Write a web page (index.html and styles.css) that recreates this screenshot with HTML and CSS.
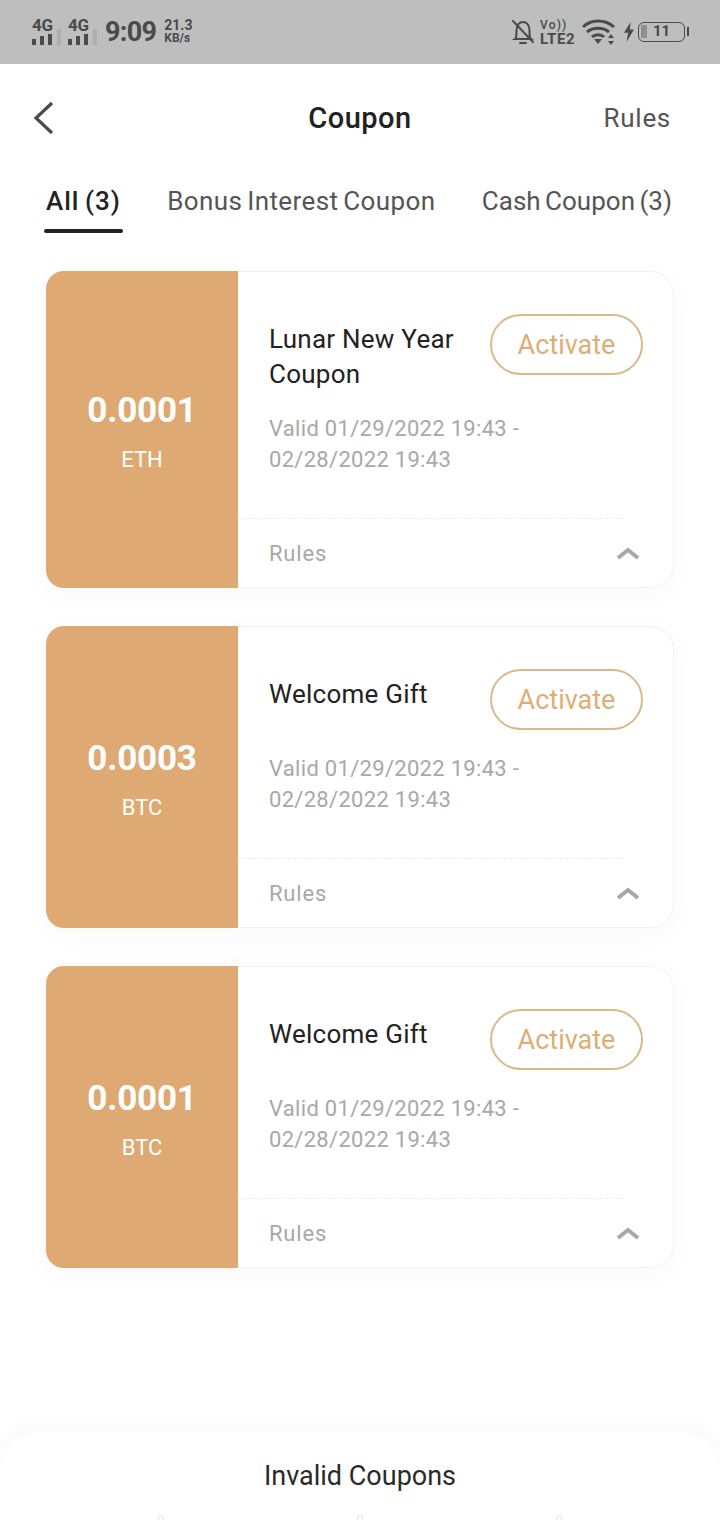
FILE: index.html
```html
<!DOCTYPE html>
<html lang="en">
<head>
    <meta charset="UTF-8">
    <meta name="viewport" content="width=device-width, initial-scale=1.0">
    <title>Coupon</title>
    <link rel="stylesheet" href="styles.css">
</head>
<body>

<div class="status-bar">
    <div class="status-left">
        <div class="sim">
            <div class="sim-signal">
                <span class="sim-label">4G</span>
                <svg width="20" height="11" viewBox="0 0 20 11"><path fill="#4a4a4a" d="M0 5h4v6H0zM8 2h4v9H8zM16 0h4v11h-4z"/></svg>
            </div>
            <i class="sim-off"></i>
        </div>
        <div class="sim">
            <div class="sim-signal">
                <span class="sim-label">4G</span>
                <svg width="20" height="11" viewBox="0 0 20 11"><path fill="#4a4a4a" d="M0 5h4v6H0zM8 2h4v9H8zM16 0h4v11h-4z"/></svg>
            </div>
            <i class="sim-off"></i>
        </div>
        <span class="clock">9:09</span>
        <span class="speed">21.3<small>KB/s</small></span>
    </div>
    <div class="status-right">
        <svg class="bell" width="22" height="26" viewBox="0 0 22 26" fill="none" stroke="#4a4a4a" stroke-width="2"><path d="M3 20c1.500-1 1.500-3 1.500-9 0-5 3-8 6.500-8s6.500 3 6.500 8c0 6 0 8 1.500 9z"/><path d="M8 24h6M1 2l20 21" stroke-linecap="round"/></svg>
        <span class="volte"><small>Vo))</small>LTE2</span>
        <svg class="wifi" width="34" height="26" viewBox="0 0 34 26" fill="none" stroke="#4a4a4a" stroke-width="3"><path d="M1 8c8-8 22-8 31 0M5 13c6-5 16-5 22 0M10 18c3-3 9-3 12 0"/><path fill="#4a4a4a" stroke="none" d="M12 20h8l-4 5zM29 15l3 4h-6zM29 26l3-4h-6z"/></svg>
        <svg class="bolt" width="14" height="20" viewBox="0 0 14 24"><path fill="#4a4a4a" d="M9 0 1 13h5l-2 11 9-15H8z"/></svg>
        <div class="battery"><i class="battery-level"></i>11</div>
    </div>
</div>

<div class="header">
    <svg class="back" width="24" height="34" viewBox="0 0 24 34" fill="none" stroke="#4a4a4a" stroke-width="3.2"><path d="M20 2 4 17l16 15"/></svg>
    <h1>Coupon</h1>
    <a class="header-rules">Rules</a>
</div>

<div class="tabs">
    <div class="tab active">All (3)</div>
    <div class="tab">Bonus Interest Coupon</div>
    <div class="tab tab-cash">Cash Coupon (3)</div>
</div>

<div class="coupon-list">
    <div class="coupon">
        <div class="coupon-amount">
            <div class="amount">0.0001</div>
            <div class="currency">ETH</div>
        </div>
        <div class="coupon-main">
            <div class="coupon-body">
                <div class="coupon-top">
                    <div class="coupon-title">Lunar New Year Coupon</div>
                    <button class="activate">Activate</button>
                </div>
                <div class="valid">Valid 01/29/2022 19:43 -<br>02/28/2022 19:43</div>
            </div>
            <div class="coupon-rules">
                <span>Rules</span>
                <svg width="22" height="14" viewBox="0 0 22 14" fill="none" stroke="#a8a8a8" stroke-width="4"><path d="M1 12 11 4l10 8"/></svg>
            </div>
        </div>
    </div>

    <div class="coupon">
        <div class="coupon-amount">
            <div class="amount">0.0003</div>
            <div class="currency">BTC</div>
        </div>
        <div class="coupon-main">
            <div class="coupon-body">
                <div class="coupon-top">
                    <div class="coupon-title">Welcome Gift</div>
                    <button class="activate">Activate</button>
                </div>
                <div class="valid">Valid 01/29/2022 19:43 -<br>02/28/2022 19:43</div>
            </div>
            <div class="coupon-rules">
                <span>Rules</span>
                <svg width="22" height="14" viewBox="0 0 22 14" fill="none" stroke="#a8a8a8" stroke-width="4"><path d="M1 12 11 4l10 8"/></svg>
            </div>
        </div>
    </div>

    <div class="coupon">
        <div class="coupon-amount">
            <div class="amount">0.0001</div>
            <div class="currency">BTC</div>
        </div>
        <div class="coupon-main">
            <div class="coupon-body">
                <div class="coupon-top">
                    <div class="coupon-title">Welcome Gift</div>
                    <button class="activate">Activate</button>
                </div>
                <div class="valid">Valid 01/29/2022 19:43 -<br>02/28/2022 19:43</div>
            </div>
            <div class="coupon-rules">
                <span>Rules</span>
                <svg width="22" height="14" viewBox="0 0 22 14" fill="none" stroke="#a8a8a8" stroke-width="4"><path d="M1 12 11 4l10 8"/></svg>
            </div>
        </div>
    </div>
</div>

<div class="invalid-sheet">
    Invalid Coupons
    <div class="sheet-marks"><i></i><i></i><i></i></div>
</div>

</body>
</html>
```

FILE: styles.css
```css
* {
    box-sizing: border-box;
}
html, body {
    height: 1520px;
    overflow: hidden;
}
body {
    margin: 0;
    position: relative;
    background-color: white;
    font-family: Roboto, sans-serif;
    color: #222;
}
.status-bar {
    height: 64px;
    background-color: #bebebe;
    display: flex;
    justify-content: space-between;
    align-items: center;
    padding: 0 32px;
    color: #4a4a4a;
}
.status-left, .status-right {
    display: flex;
    align-items: center;
}
.sim {
    display: flex;
    align-items: flex-end;
    gap: 4px;
    width: 36px;
}
.sim-signal {
    display: flex;
    flex-direction: column;
    gap: 2px;
}
.sim-signal svg {
    display: block;
}
.sim-label {
    font-size: 17px;
    font-weight: 700;
    line-height: 13px;
    letter-spacing: -0.3px;
}
.sim-off {
    width: 4px;
    height: 16px;
    background-color: #aeaeae;
}
.clock {
    font-size: 27px;
    font-weight: 700;
    letter-spacing: -0.7px;
    margin: 0 8px 0 1px;
}
.speed {
    font-size: 14px;
    font-weight: 700;
    line-height: 13px;
}
.speed small {
    display: block;
    font-size: 12px;
}
.status-right {
    margin-right: 3px;
}
.volte {
    font-size: 15px;
    font-weight: 700;
    line-height: 14px;
    letter-spacing: 0.6px;
    margin: 0 6px;
    width: 36px;
}
.volte small {
    display: block;
    font-size: 12px;
    font-weight: 500;
    letter-spacing: 1.2px;
}
.bolt {
    margin: 0 2px 0 6px;
}
.battery {
    position: relative;
    width: 47px;
    height: 20px;
    border: 1.5px solid #4a4a4a;
    border-radius: 6px;
    font-size: 15px;
    font-weight: 700;
    line-height: 17px;
    text-align: center;
}
.battery::after {
    content: "";
    position: absolute;
    right: -5px;
    top: 4px;
    width: 2px;
    height: 9px;
    background-color: #4a4a4a;
}
.battery-level {
    position: absolute;
    left: 2px;
    top: 2px;
    width: 6px;
    height: 13px;
    background-color: #8f8f8f;
}
.header {
    position: relative;
    height: 107px;
    display: flex;
    align-items: center;
    justify-content: space-between;
    padding: 0 49px 0 32px;
}
.header h1 {
    position: absolute;
    left: 0;
    right: 0;
    margin: 0;
    text-align: center;
    font-size: 29px;
    font-weight: 500;
    letter-spacing: 0.5px;
}
.header-rules {
    font-size: 26px;
    color: #555;
    letter-spacing: 0.7px;
}
.tabs {
    display: flex;
    justify-content: space-between;
    padding: 0 48px 0 46px;
    height: 62px;
    font-size: 26px;
    color: #555;
    letter-spacing: 0.4px;
    word-spacing: -2px;
}
.tab {
    position: relative;
    line-height: 60px;
    white-space: nowrap;
}
.tab-cash {
    letter-spacing: 0;
}
.tab.active {
    color: #222;
    font-weight: 500;
    letter-spacing: 1px;
}
.tab.active::after {
    content: "";
    position: absolute;
    left: -2px;
    right: -2px;
    bottom: 0;
    height: 4px;
    border-radius: 2px;
    background-color: #222;
}
.coupon-list {
    display: flex;
    flex-direction: column;
    gap: 38px;
    padding: 38px 46px 0;
}
.coupon {
    display: flex;
    border-radius: 24px 24px 24px 18px;
    box-shadow: 0 6px 30px rgba(0, 0, 0, 0.03);
}
.coupon-amount {
    flex: 0 0 192px;
    background-color: #dfa974;
    border-radius: 18px 0 0 18px;
    color: white;
    display: flex;
    flex-direction: column;
    align-items: center;
    justify-content: center;
    padding-top: 5px;
}
.amount {
    font-size: 35px;
    font-weight: 700;
    line-height: 44px;
    letter-spacing: -0.2px;
}
.currency {
    font-size: 22px;
    line-height: 30px;
    margin-top: 12px;
}
.coupon-main {
    flex: 1;
    min-width: 0;
    background-color: white;
    border: 1px solid #f1f1f1;
    border-left: none;
    border-radius: 0 24px 24px 0;
}
.coupon-body {
    padding: 42px 30px 43px 31px;
}
.coupon-top {
    display: flex;
    justify-content: space-between;
    align-items: flex-start;
}
.coupon-title {
    width: 200px;
    padding-top: 8px;
    margin-bottom: -2px;
    font-size: 26px;
    line-height: 35px;
    letter-spacing: 0.25px;
}
.activate {
    width: 153px;
    height: 61px;
    border: 2px solid #d9b98c;
    border-radius: 31px;
    background-color: white;
    color: #dcae74;
    font-family: Roboto, sans-serif;
    font-size: 27px;
    padding: 1px 0 0;
}
.valid {
    margin-top: 23px;
    font-size: 22px;
    line-height: 31px;
    color: #a8a8a8;
    letter-spacing: 0.3px;
}
.coupon-rules {
    height: 69px;
    display: flex;
    align-items: center;
    justify-content: space-between;
    padding: 0 34px 0 31px;
    font-size: 22px;
    letter-spacing: 0.8px;
    color: #a8a8a8;
    position: relative;
}
.coupon-rules span {
    padding-top: 2px;
}
.coupon-rules::before {
    content: "";
    position: absolute;
    top: 0;
    left: 0;
    right: 50px;
    border-top: 1px dashed #ececec;
}
.invalid-sheet {
    position: absolute;
    left: 0;
    right: 0;
    bottom: 0;
    height: 88px;
    background-color: white;
    border-radius: 40px 40px 0 0;
    box-shadow: 0 -6px 24px rgba(0, 0, 0, 0.03);
    display: flex;
    align-items: center;
    justify-content: center;
    font-size: 27px;
    color: #2a2a2a;
}
.sheet-marks {
    position: absolute;
    left: 158px;
    right: 158px;
    bottom: 0;
    display: flex;
    justify-content: space-between;
}
.sheet-marks i {
    width: 6px;
    height: 5px;
    border: 1px solid #e6e6e6;
    border-bottom: none;
    border-radius: 3px 3px 0 0;
}
```
